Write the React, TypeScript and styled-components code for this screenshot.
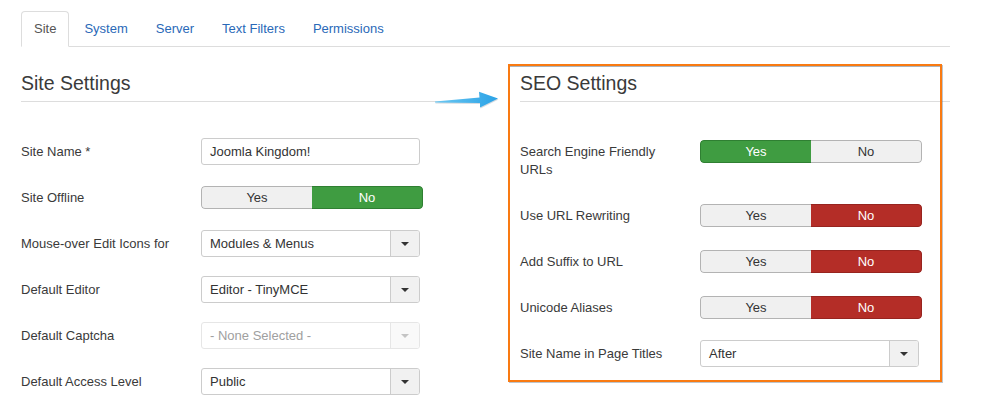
import React from 'react';
import styled, { createGlobalStyle, css } from 'styled-components';

const GlobalStyle = createGlobalStyle`
  html, body {
    margin: 0;
    padding: 0;
    background: #ffffff;
    overflow: hidden;
  }
  body {
    font-family: 'Liberation Sans', Arial, Helvetica, sans-serif;
    font-size: 13px;
    color: #333333;
  }
`

const Page = styled.div`
  width: 929px;
  padding: 11px 0 0 21px;
`

const TabBar = styled.ul`
  display: flex;
  margin: 0;
  padding: 0;
  list-style: none;
  border-bottom: 1px solid #dddddd;
`

const Tab = styled.li<{ $active?: boolean }>`
  margin: 0 2px -1px 0;
  padding: 8px 12px;
  line-height: 18px;
  font-size: 13px;
  border: 1px solid transparent;
  border-radius: 4px 4px 0 0;
  color: #2a69b8;
  ${p => p.$active && css`
    color: #555555;
    background: #ffffff;
    border-color: #dddddd;
    border-bottom-color: #ffffff;
  `}
`

const Columns = styled.div`
  position: relative;
  display: grid;
  grid-template-columns: 469px 430px;
  column-gap: 30px;
  padding-top: 24px;
`

const Column = styled.section``

const Heading = styled.h2`
  margin: 0 0 36px;
  padding-bottom: 6px;
  font-size: 19.5px;
  line-height: 24px;
  font-weight: 400;
  color: #3a3a3a;
  border-bottom: 1px solid #dddddd;
`

const Row = styled.div`
  display: flex;
  align-items: flex-start;
  min-height: 27px;
  margin-bottom: 19px;
`

const Label = styled.label`
  width: 180px;
  flex: none;
  padding: 5px 0 4px;
  line-height: 18px;
  color: #3a3a3a;
`

const TextInput = styled.div`
  box-sizing: border-box;
  width: 219px;
  height: 27px;
  padding: 0 8px;
  line-height: 25px;
  border: 1px solid #cccccc;
  border-radius: 3px;
  background: #ffffff;
  color: #333333;
`

const Toggle = styled.div`
  display: flex;
  box-sizing: border-box;
  width: 222px;
  height: 23px;
  margin-top: 2px;
  border-radius: 4px;
  overflow: hidden;
`

const ToggleOption = styled.div<{ $tone?: 'on' | 'off' }>`
  flex: 1;
  text-align: center;
  line-height: 21px;
  background: #f0f0f0;
  color: #333333;
  border: 1px solid #b3b3b3;
  &:first-child { border-radius: 4px 0 0 4px; border-right: none; }
  &:last-child { border-radius: 0 4px 4px 0; border-left: none; }
  ${p => p.$tone === 'on' && css`
    background: #3f9c41;
    border-color: #2f7f32;
    color: #ffffff;
  `}
  ${p => p.$tone === 'off' && css`
    background: #b42d27;
    border-color: #97241f;
    color: #ffffff;
  `}
`

const SelectBox = styled.div<{ $disabled?: boolean }>`
  display: flex;
  box-sizing: border-box;
  width: 219px;
  height: 27px;
  border: 1px solid #cccccc;
  border-radius: 3px;
  background: #ffffff;
  overflow: hidden;
  ${p => p.$disabled && css`
    border-color: #e6e6e6;
  `}
`

const SelectValue = styled.span<{ $disabled?: boolean }>`
  flex: 1;
  padding-left: 8px;
  line-height: 25px;
  color: ${p => (p.$disabled ? '#a0a0a0' : '#333333')};
`

const SelectCaret = styled.span<{ $disabled?: boolean }>`
  display: flex;
  align-items: center;
  justify-content: center;
  width: 28px;
  border-left: 1px solid ${p => (p.$disabled ? '#e6e6e6' : '#cccccc')};
  background: ${p => (p.$disabled ? '#f9f9f9' : '#f1f1f1')};
  &::after {
    content: "";
    border-left: 4px solid transparent;
    border-right: 4px solid transparent;
    border-top: 4px solid ${p => (p.$disabled ? '#c4c4c4' : '#333333')};
  }
`

const Highlight = styled.div`
  position: absolute;
  left: 487px;
  top: 17px;
  box-sizing: border-box;
  width: 434px;
  height: 318px;
  border: 2px solid #f97a12;
  box-shadow: inset 0 1px 0 rgba(70, 90, 110, 0.45), 1px 1px 0 rgba(70, 90, 110, 0.35);
  pointer-events: none;
`

const Arrow = styled.svg`
  position: absolute;
  left: 413px;
  top: 43px;
`

type Choice = 'yes' | 'no'

function YesNo({ value, danger }: { value: Choice; danger?: boolean }) {
  return (
    <Toggle>
      <ToggleOption $tone={value === 'yes' ? 'on' : undefined}>Yes</ToggleOption>
      <ToggleOption $tone={value === 'no' ? (danger ? 'off' : 'on') : undefined}>No</ToggleOption>
    </Toggle>
  )
}

function Select({ value, disabled }: { value: string; disabled?: boolean }) {
  return (
    <SelectBox $disabled={disabled}>
      <SelectValue $disabled={disabled}>{value}</SelectValue>
      <SelectCaret $disabled={disabled} />
    </SelectBox>
  )
}

function App() {
  return (
    <>
      <GlobalStyle />
      <Page>
        <TabBar>
          <Tab $active>Site</Tab>
          <Tab>System</Tab>
          <Tab>Server</Tab>
          <Tab>Text Filters</Tab>
          <Tab>Permissions</Tab>
        </TabBar>
        <Columns>
          <Column>
            <Heading>Site Settings</Heading>
            <Row>
              <Label>Site Name *</Label>
              <TextInput>Joomla Kingdom!</TextInput>
            </Row>
            <Row>
              <Label>Site Offline</Label>
              <YesNo value="no" />
            </Row>
            <Row>
              <Label>Mouse-over Edit Icons for</Label>
              <Select value="Modules & Menus" />
            </Row>
            <Row>
              <Label>Default Editor</Label>
              <Select value="Editor - TinyMCE" />
            </Row>
            <Row>
              <Label>Default Captcha</Label>
              <Select value="- None Selected -" disabled />
            </Row>
            <Row>
              <Label>Default Access Level</Label>
              <Select value="Public" />
            </Row>
          </Column>
          <Column>
            <Heading>SEO Settings</Heading>
            <Row>
              <Label>Search Engine Friendly<br />URLs</Label>
              <YesNo value="yes" />
            </Row>
            <Row>
              <Label>Use URL Rewriting</Label>
              <YesNo value="no" danger />
            </Row>
            <Row>
              <Label>Add Suffix to URL</Label>
              <YesNo value="no" danger />
            </Row>
            <Row>
              <Label>Unicode Aliases</Label>
              <YesNo value="no" danger />
            </Row>
            <Row>
              <Label>Site Name in Page Titles</Label>
              <Select value="After" />
            </Row>
          </Column>
          <Highlight />
          <Arrow width="66" height="20" viewBox="0 0 66 20">
            <defs>
              <linearGradient id="arrowFill" x1="0" y1="0" x2="1" y2="0">
                <stop offset="0" stopColor="#6cc8f2" />
                <stop offset="1" stopColor="#2aa2e6" />
              </linearGradient>
            </defs>
            <path d="M1 12.6 L46 13 L46 17.6 L64 8.6 L45 1.8 L45.5 7.6 L1 11.4 Z" fill="rgba(90,110,130,0.25)" transform="translate(0.5 1)" />
            <path d="M1 12.6 L46 13 L46 17.6 L64 8.6 L45 1.8 L45.5 7.6 L1 11.4 Z" fill="url(#arrowFill)" />
          </Arrow>
        </Columns>
      </Page>
    </>
  );
}

export default App;
